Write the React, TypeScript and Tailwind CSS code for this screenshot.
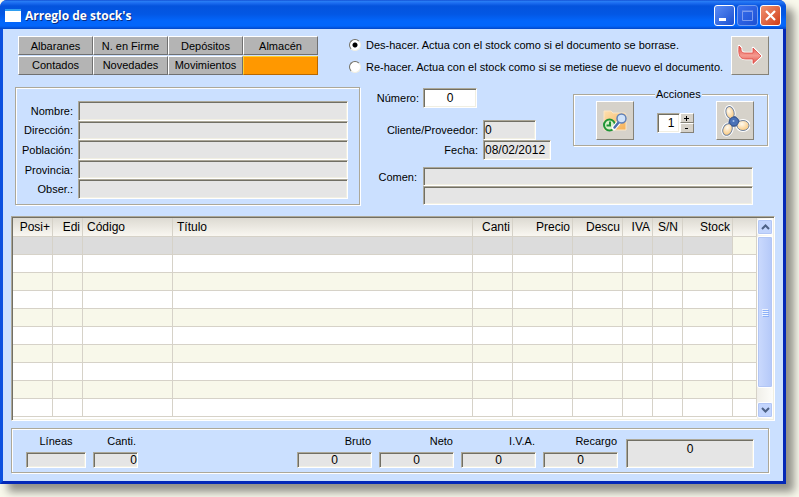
import React, { useState } from 'react';
import clsx from 'clsx';

const TABS = ['Albaranes', 'N. en Firme', 'Depósitos', 'Almacén', 'Contados', 'Novedades', 'Movimientos', ''];

const PERSON_FIELDS = [
  { id: 'nombre', label: 'Nombre:' },
  { id: 'direccion', label: 'Dirección:' },
  { id: 'poblacion', label: 'Población:' },
  { id: 'provincia', label: 'Provincia:' },
  { id: 'obser', label: 'Obser.:' },
];

const COLUMNS = [
  { name: 'Posi+', width: 'w-[40px]', align: 'text-right pr-[2px]' },
  { name: 'Edi', width: 'w-[30px]', align: 'text-right pr-[2px]' },
  { name: 'Código', width: 'w-[90px]', align: 'text-left pl-1' },
  { name: 'Título', width: '', align: 'text-left pl-1' },
  { name: 'Canti', width: 'w-[40px]', align: 'text-right pr-[2px]' },
  { name: 'Precio', width: 'w-[60px]', align: 'text-right pr-[2px]' },
  { name: 'Descu', width: 'w-[50px]', align: 'text-right pr-[2px]' },
  { name: 'IVA', width: 'w-[30px]', align: 'text-right pr-[2px]' },
  { name: 'S/N', width: 'w-[30px]', align: 'text-left pl-[5px]' },
  { name: 'Stock', width: 'w-[50px]', align: 'text-right pr-[2px]' },
  { name: '', width: 'w-[24px]', align: '' },
];

const TOTALS = [
  { id: 'bruto', label: 'Bruto' },
  { id: 'neto', label: 'Neto' },
  { id: 'iva', label: 'I.V.A.' },
  { id: 'recargo', label: 'Recargo' },
];

const ROW_COUNT = 10;

// Classic two-pixel bevels
const SUNKEN =
  'rounded-none border border-t-[#aca899] border-l-[#aca899] border-r-white border-b-white shadow-[inset_1px_1px_0_#716f64,inset_-1px_-1px_0_#f1efe2] outline-none';
const ETCHED = 'border border-[#aca899] shadow-[1px_1px_0_#fff,inset_1px_1px_0_#fff]';
const RAISED = 'border border-t-white border-l-white border-r-[#858278] border-b-[#858278] bg-[#d6d2ca]';

interface FieldProps {
  id: string;
  value?: string;
  className?: string;
  editable?: boolean;
  label?: string;
}

const Field: React.FC<FieldProps> = ({ id, value = '', className, editable, label }) => (
  <input
    id={id}
    type="text"
    defaultValue={value}
    readOnly={!editable}
    aria-label={label}
    className={clsx(SUNKEN, 'min-w-0 text-[12px]', editable ? 'bg-white' : 'bg-[#e5e5e5]', className)}
  />
);

const ReturnIcon = () => (
  <svg width="26" height="24" viewBox="0 0 26 24" aria-hidden="true">
    <defs>
      <linearGradient id="red" x1="0" y1="0" x2="0" y2="1">
        <stop offset="0" stopColor="#e2524a" />
        <stop offset="0.55" stopColor="#f59a90" />
        <stop offset="1" stopColor="#e0554c" />
      </linearGradient>
    </defs>
    <g strokeLinejoin="round" fill="url(#red)">
      <path d="M2 2L4 4C4 8 5 9 9 9H16V4L24 12L16 19.500V15H9C3 15 1 12 2 2Z" stroke="#fff" strokeWidth="2.500" />
      <path d="M2 2L4 4C4 8 5 9 9 9H16V4L24 12L16 19.500V15H9C3 15 1 12 2 2Z" stroke="#dc4a42" strokeWidth="0.800" />
    </g>
  </svg>
);

const FolderSearchIcon = () => (
  <svg width="26" height="24" viewBox="0 0 26 24" aria-hidden="true">
    <defs>
      <linearGradient id="folder" x1="0" y1="0" x2="1" y2="1">
        <stop offset="0" stopColor="#fde0b0" />
        <stop offset="1" stopColor="#f4b056" />
      </linearGradient>
    </defs>
    <path d="M2 2H9L11 4H22Q24 4 24 6V21H2Z" fill="url(#folder)" stroke="#fbe6c6" />
    <circle cx="7.500" cy="16" r="5.500" fill="#d9efc8" stroke="#1f9436" strokeWidth="2" />
    <path d="M8 12.500V16.500H4.500" fill="none" stroke="#1f9436" strokeWidth="2" />
    <path d="M17 13L12 19" stroke="#fff" strokeWidth="4.500" strokeLinecap="round" />
    <path d="M17 13L12.500 18.500" stroke="#4b6fae" strokeWidth="2.500" strokeLinecap="round" />
    <circle cx="19.500" cy="9.500" r="4.500" fill="#cfe2fa" stroke="#5f80b8" strokeWidth="1.500" />
  </svg>
);

const FanIcon = () => (
  <svg width="30" height="32" viewBox="0 0 30 32" aria-hidden="true">
    <defs>
      <radialGradient id="blade" cx="0.4" cy="0.35" r="0.7">
        <stop offset="0" stopColor="#fffaf0" />
        <stop offset="1" stopColor="#f8c67a" />
      </radialGradient>
    </defs>
    <g fill="#fff" stroke="#fff" strokeWidth="3">
      <ellipse cx="10" cy="7.500" rx="4" ry="6" transform="rotate(-15 10 7.500)" />
      <ellipse cx="23" cy="20.500" rx="6" ry="5" />
      <ellipse cx="7.500" cy="24.500" rx="4.500" ry="6" transform="rotate(25 7.500 24.500)" />
    </g>
    <path d="M10 12L15 11L20 16L19 21L11 22L8 19Z" fill="#45659f" />
    <g fill="url(#blade)" stroke="#71839f" strokeWidth="1">
      <ellipse cx="10" cy="7.500" rx="4" ry="6" transform="rotate(-15 10 7.500)" />
      <ellipse cx="23" cy="20.500" rx="6" ry="5" />
      <ellipse cx="7.500" cy="24.500" rx="4.500" ry="6" transform="rotate(25 7.500 24.500)" />
    </g>
    <circle cx="14" cy="16.500" r="4.500" fill="#4a72b8" stroke="#38558c" />
    <circle cx="13.500" cy="16" r="1" fill="#a9c4ec" />
  </svg>
);

const TitleBar = () => (
  <header className="flex h-[29px] items-center bg-[linear-gradient(#0a3fc9_0px,#2b80f5_1px,#1c6cf0_3px,#0453dd_6px,#0357e4_14px,#0366fb_21px,#0366fb_26px,#0347c8_29px)] pt-[2px] pr-[5px] pl-[5px]">
    <span className="h-[13px] w-4 border-t-2 border-t-[#2f9df0] bg-white" />
    <h1 className="ml-1 flex-1 font-['Open_Sans',sans-serif] text-[12px] leading-4 font-bold text-white [text-shadow:1px_1px_0_#0a2a80]">
      Arreglo de stock's
    </h1>
    <div className="flex gap-[2px]">
      <button aria-label="Minimizar" className="h-[21px] w-[21px] rounded-[3px] border border-white bg-linear-to-br from-[#5b8cf5] to-[#1a4fd0]">
        <svg viewBox="0 0 19 19" className="block"><path d="M4 12h7v3H4z" fill="#fff" /></svg>
      </button>
      <button aria-label="Maximizar" disabled className="h-[21px] w-[21px] rounded-[3px] border border-[#6f9bf0] bg-linear-to-br from-[#3a70ee] to-[#1d50d4]">
        <svg viewBox="0 0 19 19" className="block"><path d="M4.500 5.500h10v9h-10zM4 5h11" fill="none" stroke="#7d9cee" /></svg>
      </button>
      <button aria-label="Cerrar" className="h-[21px] w-[21px] rounded-[3px] border border-white bg-linear-to-br from-[#f0916f] to-[#cf3a10]">
        <svg viewBox="0 0 19 19" className="block"><path d="M5 5l9 9M14 5l-9 9" stroke="#fff" strokeWidth="2.200" /></svg>
      </button>
    </div>
  </header>
);

const ScrollBar = () => (
  <div className="flex w-4 flex-col gap-px bg-linear-to-r from-[#f0efe9] to-[#fdfdfa] py-px">
    <button aria-label="Subir" className="flex h-4 items-center justify-center rounded-[2px] border border-white bg-[#c3d5fd] shadow-[inset_0_0_0_1px_#b2c6f5]">
      <svg width="9" height="6" viewBox="0 0 9 6"><path d="M1 5l3.500-3.500L8 5" fill="none" stroke="#4d6185" strokeWidth="2" /></svg>
    </button>
    <div className="flex h-[152px] flex-col items-center justify-center gap-px rounded-[2px] border border-white bg-linear-to-r from-[#cbdafd] to-[#b4c8f8] shadow-[inset_0_0_0_1px_#b2c6f5]">
      {[0, 1, 2, 3].map((i) => (
        <span key={i} className="h-px w-[6px] bg-[#eef4fe] shadow-[1px_1px_0_#8cb0f8]" />
      ))}
    </div>
    <button aria-label="Bajar" className="mt-auto flex h-4 items-center justify-center rounded-[2px] border border-white bg-[#c3d5fd] shadow-[inset_0_0_0_1px_#b2c6f5]">
      <svg width="9" height="6" viewBox="0 0 9 6"><path d="M1 1l3.500 3.500L8 1" fill="none" stroke="#4d6185" strokeWidth="2" /></svg>
    </button>
  </div>
);

const StockTable = () => (
  <div className={clsx(SUNKEN, 'mr-2 flex bg-white p-px')}>
    <div className="flex-1 pb-[2px]">
      <table className="w-full table-fixed border-separate border-spacing-0 text-[12px] leading-4">
        <thead>
          <tr className="h-[19px] bg-linear-to-b from-[#dddad2] to-[#fbf9f3]">
            {COLUMNS.map((col, i) => (
              <th
                key={i}
                className={clsx('border-r border-b border-[#d6d2c8] p-0 font-normal whitespace-nowrap', col.width, col.align)}
              >
                {col.name}
              </th>
            ))}
          </tr>
        </thead>
        <tbody>
          {Array.from({ length: ROW_COUNT }, (_, row) => (
            <tr key={row} className={clsx('h-[18px]', row % 2 === 0 ? 'bg-[#f8f8ea]' : 'bg-white')}>
              {COLUMNS.map((_col, i) => (
                <td
                  key={i}
                  className={clsx(
                    'border-r border-b border-[#d6d2c8] p-0',
                    row === 0 && i < COLUMNS.length - 1 && 'bg-[#dcdcdc]'
                  )}
                />
              ))}
            </tr>
          ))}
        </tbody>
      </table>
    </div>
    <ScrollBar />
  </div>
);

export default function App() {
  const [mode, setMode] = useState('deshacer');
  const [copies, setCopies] = useState(1);

  const radio =
    'm-0 h-3 w-3 appearance-none rounded-full border border-t-[#716f64] border-l-[#716f64] border-r-[#f1efe2] border-b-[#f1efe2] bg-white checked:bg-[radial-gradient(circle,#000_2px,#fff_3px)]';

  return (
    <div className="min-h-screen bg-[#f9f9ec] pr-[13px] pb-[13px] font-['Liberation_Sans',Arial,sans-serif] text-[11px] leading-[14px] text-black">
      <main className="overflow-hidden rounded-t-[7px] bg-[#0a3fd8] shadow-[8px_8px_8px_rgba(0,0,0,0.42)]">
        <TitleBar />
        <div className="border-x-[3px] border-b-[3px] border-l-[#0a50e0] border-r-[#0328b8] border-b-[#0328b8] bg-[#cbe0ff] pt-[7px] pb-2 pl-2">
          {/* Document type, mode and exit */}
          <div className="flex pr-[14px] pl-[7px]">
            <nav className="grid w-[300px] grid-cols-4">
              {TABS.map((tab, i) => (
                <button
                  key={i}
                  aria-label={tab || 'Almacén activo'}
                  className={clsx(
                    'h-[19px] border text-[11px] leading-[14px]',
                    tab
                      ? 'border-t-white border-l-white border-r-[#707070] border-b-[#707070] bg-[#b4b4b4]'
                      : 'border-t-[#ffd030] border-l-[#ffd030] border-r-[#b86800] border-b-[#b86800] bg-[#ff9800]'
                  )}
                >
                  {tab}
                </button>
              ))}
            </nav>
            <div className="ml-[31px] flex flex-1 flex-col gap-2 pt-[2px]">
              <label className="flex items-center gap-[5px] whitespace-nowrap">
                <input type="radio" name="modo" className={radio} checked={mode === 'deshacer'} onChange={() => setMode('deshacer')} />
                Des-hacer. Actua con el stock como si el documento se borrase.
              </label>
              <label className="flex items-center gap-[5px] whitespace-nowrap">
                <input type="radio" name="modo" className={radio} checked={mode === 'rehacer'} onChange={() => setMode('rehacer')} />
                Re-hacer. Actua con el stock como si se metiese de nuevo el documento.
              </label>
            </div>
            <button aria-label="Salir" className={clsx(RAISED, 'flex h-[39px] w-[38px] items-center justify-center')}>
              <ReturnIcon />
            </button>
          </div>

          <div className="mt-3 flex pr-[15px] pl-1">
            {/* Client data */}
            <section className={clsx(ETCHED, 'w-[345px] pt-[13px] pr-[11px] pb-[5px] pl-[6px]')}>
              <div className="grid h-[98px] grid-rows-5">
                {PERSON_FIELDS.map((field) => (
                  <div key={field.id} className="flex items-center">
                    <label htmlFor={field.id} className="w-[51px] text-right">{field.label}</label>
                    <Field id={field.id} className="ml-[5px] h-full flex-1" />
                  </div>
                ))}
              </div>
            </section>

            <section className="flex flex-1 flex-col pl-[11px]">
              <div className="flex justify-between">
                <div className="pt-px">
                  <div className="flex items-center">
                    <label htmlFor="numero" className="w-[48px] text-right">Número:</label>
                    <Field id="numero" value="0" editable className="ml-1 h-5 w-[54px] text-center" />
                  </div>
                  <div className="mt-3 flex items-center">
                    <label htmlFor="cliente" className="w-[107px] text-right">Cliente/Proveedor:</label>
                    <Field id="cliente" value="0" className="ml-[5px] h-5 w-[53px] pl-px" />
                  </div>
                  <div className="flex items-center">
                    <label htmlFor="fecha" className="w-[107px] text-right">Fecha:</label>
                    <Field id="fecha" value="08/02/2012" className="ml-[5px] h-5 w-[68px] pl-px" />
                  </div>
                </div>

                <fieldset className={clsx(ETCHED, 'flex h-[59px] w-[195px] items-start justify-between pr-[13px] pl-[22px]')}>
                  <legend className="ml-[59px] bg-[#cbe0ff] px-px">Acciones</legend>
                  <button aria-label="Buscar" className={clsx(RAISED, 'flex h-[39px] w-[38px] items-center justify-center')}>
                    <FolderSearchIcon />
                  </button>
                  <div className="mt-3 flex">
                    <input
                      type="text"
                      aria-label="Copias"
                      value={copies}
                      onChange={(e) => setCopies(Number(e.target.value) || 0)}
                      className={clsx(SUNKEN, 'h-5 w-[23px] bg-white pr-1 text-right text-[12px]')}
                    />
                    <div className="flex flex-col">
                      <button aria-label="Más" onClick={() => setCopies(copies + 1)} className={clsx(RAISED, 'flex h-[10px] w-[14px] items-center justify-center')}>
                        <svg width="5" height="5" viewBox="0 0 5 5"><path d="M2 0h1v5H2zM0 2h5v1H0z" /></svg>
                      </button>
                      <button aria-label="Menos" onClick={() => setCopies(copies - 1)} className={clsx(RAISED, 'flex h-[10px] w-[14px] items-center justify-center')}>
                        <svg width="5" height="5" viewBox="0 0 5 5"><path d="M1 2h3v1H1z" /></svg>
                      </button>
                    </div>
                  </div>
                  <button aria-label="Procesar" className={clsx(RAISED, 'flex h-[39px] w-[38px] items-center justify-center')}>
                    <FanIcon />
                  </button>
                </fieldset>
              </div>

              <div className="mt-auto flex items-start pr-[15px]">
                <label htmlFor="comen1" className="mt-[3px] w-[48px] pr-[2px] text-right">Comen:</label>
                <div className="ml-1 flex flex-1 flex-col">
                  <Field id="comen1" className="h-[19px]" />
                  <Field id="comen2" label="Comen, segunda línea" className="h-[19px]" />
                </div>
              </div>
            </section>
          </div>

          <div className="mt-[11px]">
            <StockTable />
          </div>

          {/* Totals */}
          <footer className={clsx(ETCHED, 'mt-[7px] mr-[14px] flex items-end pt-[5px] pr-[14px] pb-1 pl-[14px]')}>
            <div className="flex flex-col gap-1">
              <label htmlFor="lineas" className="text-center">Líneas</label>
              <Field id="lineas" className="h-4 w-[60px]" />
            </div>
            <div className="ml-[7px] flex flex-col gap-1">
              <label htmlFor="canti" className="pr-[2px] text-right">Canti.</label>
              <Field id="canti" value="0" className="h-4 w-[45px] text-right" />
            </div>
            <div className="ml-auto flex gap-[7px]">
              {TOTALS.map((total) => (
                <div key={total.id} className="flex flex-col gap-1">
                  <label htmlFor={total.id} className="pr-px text-right">{total.label}</label>
                  <Field id={total.id} value="0" className="h-4 w-[75px] text-center" />
                </div>
              ))}
            </div>
            <Field id="total" value="0" label="Total" className="ml-2 h-[29px] w-[128px] pb-[10px] text-center" />
          </footer>
        </div>
      </main>
    </div>
  );
}
